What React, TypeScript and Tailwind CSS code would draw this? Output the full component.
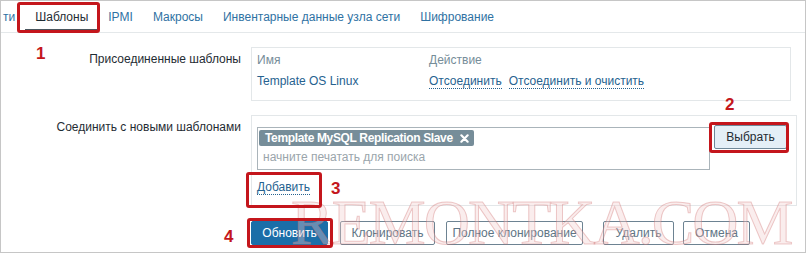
const tabs = ["IPMI", "Макросы", "Инвентарные данные узла сети", "Шифрование"];

function Annotation({ className }: { className: string }) {
  return <div className={`pointer-events-none absolute rounded-[3px] border-[3px] border-[#c4161c] ${className}`} />;
}

function Num({ n, className }: { n: string; className: string }) {
  return (
    <div className={`pointer-events-none absolute text-[17px] font-bold leading-none text-[#c4161c] ${className}`}>{n}</div>
  );
}

export default function App() {
  return (
    <div className="relative h-[254px] w-[806px] overflow-hidden bg-white font-['Liberation_Sans',Arial,sans-serif] text-[12px] leading-[14px] text-[#1f2c33]">
      <div className="h-[253px] border border-[#c6c6c6]">
        {/* tabs */}
        <nav className="flex h-[32px] items-stretch border-b border-[#e4e8ea] pl-[2px]">
          <span className="flex items-center pr-[10px] text-[#2f72a3]">ти</span>
          <span className="relative flex items-center px-[10px] text-[#1f2c33]">
            Шаблоны
            <span className="absolute bottom-[1px] left-0 right-0 h-[2px] bg-[#4a565e]" />
          </span>
          {tabs.map((t) => (
            <span key={t} className="flex items-center px-[10px] text-[#2f72a3]">
              {t}
            </span>
          ))}
        </nav>

        <div className="grid grid-cols-[240px_1fr] gap-x-[10px] pt-[14px]">
          {/* linked templates */}
          <div className="pt-[5px] text-right">Присоединенные шаблоны</div>
          <div className="h-[54px] w-[540px] border border-[#e3e7e9] px-[5px] pt-[5px]">
            <div className="grid grid-cols-[172px_1fr] text-[#768d99]">
              <span>Имя</span>
              <span>Действие</span>
            </div>
            <div className="mt-[7px] grid grid-cols-[172px_1fr] text-[#26628f]">
              <span>Template OS Linux</span>
              <span className="flex gap-[7px]">
                <span className="border-b border-dotted border-[#26628f]">Отсоединить</span>
                <span className="border-b border-dotted border-[#26628f]">Отсоединить и очистить</span>
              </span>
            </div>
          </div>

          {/* link new templates */}
          <div className="mt-[14px] pt-[5px] text-right">Соединить с новыми шаблонами</div>
          <div className="mt-[14px] h-[91px] w-[546px] border border-[#e3e7e9] px-[5px] pt-[11px]">
            <div className="flex items-start">
              <div className="h-[43px] w-[453px] border border-[#aab4ba] px-[1px] pt-[2px]">
                <span className="inline-flex h-[16px] items-center gap-[7px] rounded-[2px] bg-[#768d99] pl-[6px] pr-[5px] font-bold tracking-[-0.35px] text-white">
                  Template MySQL Replication Slave
                  <svg width="9" height="9" viewBox="0 0 10 10" className="mt-[1px]">
                    <path d="M1.5 1.5l7 7M8.5 1.5l-7 7" stroke="white" strokeWidth="2.4" strokeLinecap="round" />
                  </svg>
                </span>
                <div className="ml-[4px] mt-[4px] text-[#9aa5ab]">начните печатать для поиска</div>
              </div>
              <button
                type="button"
                className="-mt-[2px] ml-[4px] h-[24px] w-[73px] rounded-[2px] border border-[#6f8899] bg-[#e4eff7] text-[12px] text-[#1f2c33]"
              >
                Выбрать
              </button>
            </div>
            <div className="mt-[10px]">
              <span className="border-b border-dotted border-[#26628f] text-[#26628f]">Добавить</span>
            </div>
          </div>

          {/* buttons */}
          <div />
          <div className="mt-[15px] flex">
            <button type="button" className="h-[24px] w-[77px] rounded-[2px] border border-[#1b6ea8] bg-[#1b6ea8] text-white">
              Обновить
            </button>
            <button type="button" className="ml-[12px] h-[24px] w-[95px] rounded-[2px] border border-[#6d8392] bg-white text-[#5e7585]">
              Клонировать
            </button>
            <button type="button" className="ml-[11px] h-[24px] w-[137px] rounded-[2px] border border-[#6d8392] bg-white text-[#5e7585]">
              Полное клонирование
            </button>
            <button type="button" className="ml-[20px] h-[24px] w-[71px] rounded-[2px] border border-[#6d8392] bg-white text-[#5e7585]">
              Удалить
            </button>
            <button type="button" className="ml-[9px] h-[24px] w-[67px] rounded-[2px] border border-[#6d8392] bg-white text-[#5e7585]">
              Отмена
            </button>
          </div>
        </div>
      </div>

      {/* watermark */}
      <div className="pointer-events-none absolute left-[291px] top-[191px] font-['Liberation_Serif',serif] text-[64px] leading-none tracking-[-2px] text-[#f0cccc]/35 [-webkit-text-stroke:1px_rgba(205,110,110,0.35)]">
        REMONTKA.COM
      </div>

      {/* annotations */}
      <Annotation className="left-[17px] top-[2px] h-[31px] w-[83px]" />
      <Num n="1" className="left-[36px] top-[45px]" />
      <Annotation className="left-[709px] top-[122px] h-[31px] w-[80px]" />
      <Num n="2" className="left-[725px] top-[96px]" />
      <Annotation className="left-[246px] top-[172px] h-[36px] w-[76px]" />
      <Num n="3" className="left-[331px] top-[180px]" />
      <Annotation className="left-[247px] top-[218px] h-[30px] w-[86px]" />
      <Num n="4" className="left-[224px] top-[228px]" />
    </div>
  );
}
